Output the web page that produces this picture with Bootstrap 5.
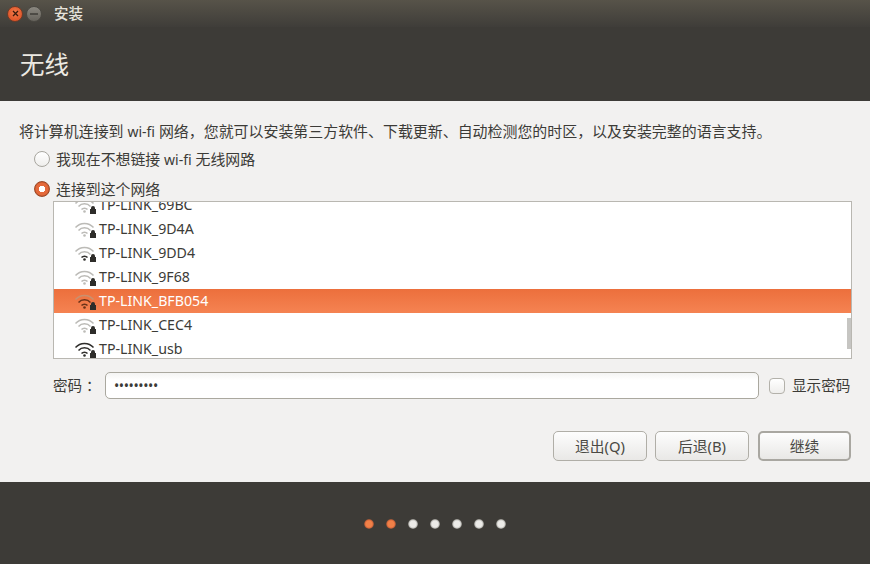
<!DOCTYPE html>
<html lang="zh-CN">
<head>
<meta charset="utf-8">
<link href="https://cdn.jsdelivr.net/npm/bootstrap@5.3.0/dist/css/bootstrap.min.css" rel="stylesheet">
<style>
html,body{width:870px;height:564px;overflow:hidden;margin:0}
body{font-family:"Noto Sans","Noto Sans CJK SC",sans-serif;font-size:14px;color:#3c3b37;background:#f2f1f0}
.shell{width:870px;height:564px}
.titlebar{height:27px;background:linear-gradient(#575349,#3f3d39);padding-left:7px;gap:3px}
.winbtn{width:16px;height:16px;border-radius:50%;font-size:0}
.winbtn svg{display:block}
.w-close{background:radial-gradient(circle at 50% 40%,#f27a4a,#d9481d);border:1px solid #6d3b28}
.w-min{background:linear-gradient(#8b8880,#66635c);border:1px solid #4a4842}
.wintitle{color:#e6e3dc;font-size:14.5px;font-weight:500;margin-left:9px;line-height:27px}
.headbar{height:74px;background:#3d3b37;padding-left:20px;padding-top:20px}
.pagetitle{color:#ece9e2;font-size:24.5px;font-weight:400;line-height:36px;margin:0}
.mainarea{height:381px;padding:20px 19px 0 20px;position:relative}
.intro{line-height:20px;font-size:14.95px;color:#3c3b37;white-space:nowrap;margin-left:-1px}
.latin{font-size:14px}
.optrow{margin-left:14px;height:20px;line-height:20px;gap:6px;white-space:nowrap;font-size:14.9px}
.opt1{margin-top:7px}
.opt2{margin-top:10px}
.radiomark{width:16px;height:16px;border-radius:50%;border:1px solid #a8a69f;background:linear-gradient(#fff,#efeeec)}
.radiomark.on{background:radial-gradient(circle,#fff 0 3px,#e4693a 3.5px 6px,#c4542a 7px);border-color:#9c4a28}
.netlist{margin-left:33px;width:799px;height:158px;margin-top:2px;background:#fff;border:1px solid #b9b7b1;overflow:hidden;position:relative}
.netrow{height:24px;padding-left:20px;gap:2px;line-height:24px;color:#3c3b37;white-space:nowrap;font-size:14.2px}
.netrow:first-child{margin-top:-9px}
.netrow.picked{background:linear-gradient(#ec6f3c,#f58352);color:#fff}
.netrow svg{flex:none}
.thumb{position:absolute;right:0;top:116px;width:4px;height:31px;background:#c6c5c2}
.pwrow{margin-top:13px;margin-left:33px;width:799px;height:27px;white-space:nowrap;font-size:14.6px}
.pwlabel{width:52px}
.pwinput{width:654px;height:27px;border:1px solid #aaa89f;border-radius:5px;background:linear-gradient(#f4f4f3,#fff 30%);padding:0 8px;font-size:14px;line-height:25px;color:#3c3b37;letter-spacing:-.4px}
.checkmark{width:16px;height:16px;border:1px solid #b3b1aa;border-radius:4px;background:linear-gradient(#fff,#efeeec);margin-left:10px;margin-right:7px}
.actions{position:absolute;left:553px;top:330px;gap:8px}
.actbtn{width:94px;height:30px;border:1px solid #b0aea7;border-radius:5px;background:linear-gradient(#fdfdfd,#e9e8e6);font-size:14.8px;color:#4a4944;line-height:28px;text-align:center}
.actbtn.primaryact{width:93px;border:2px solid #a9a7a1;line-height:26px;margin-left:1px}
.footbar{height:82px;background:#3d3b37;padding-top:37px;gap:12px;padding-left:364px}
.stepdot{width:10px;height:10px;border-radius:50%;background:radial-gradient(circle,#ecebe8 0 3px,#c9c8c4 4px,#77756f 5px)}
.stepdot.done{background:radial-gradient(circle,#f08048 0 3px,#d9683a 4px,#6f4a38 5px)}
</style>
</head>
<body>
<div class="shell d-flex flex-column">
  <div class="titlebar d-flex align-items-center">
    <span class="winbtn w-close d-flex align-items-center justify-content-center"><svg width="7" height="7" viewBox="0 0 7 7"><path d="M1 1l5 5M6 1L1 6" stroke="#3a1a0c" stroke-width="1.3"/></svg></span>
    <span class="winbtn w-min d-flex align-items-center justify-content-center"><svg width="8" height="2" viewBox="0 0 8 2"><path d="M0 1h8" stroke="#3a3934" stroke-width="1.4"/></svg></span>
    <span class="wintitle">安装</span>
  </div>
  <div class="headbar"><h1 class="pagetitle">无线</h1></div>
  <div class="mainarea">
    <div class="intro">将计算机连接到 <span class="latin">wi-fi</span> 网络，您就可以安装第三方软件、下载更新、自动检测您的时区，以及安装完整的语言支持。</div>
    <div class="optrow opt1 d-flex align-items-center"><span class="radiomark"></span><span>我现在不想链接 <span class="latin">wi-fi</span> 无线网路</span></div>
    <div class="optrow opt2 d-flex align-items-center"><span class="radiomark on"></span><span>连接到这个网络</span></div>
    <div class="netlist">
      <div class="netrow d-flex align-items-center"><svg width="23" height="18" viewBox="0 0 23 18"><g fill="none" stroke="#bcbbb7" stroke-width="1.5"><path d="M1.5 7.5a12 12 0 0 1 18 0"/><path d="M4.5 10.5a8 8 0 0 1 12 0"/><path d="M7.5 13.5a4 4 0 0 1 6 0"/></g><circle cx="10.5" cy="15.5" r="1.3" fill="#bcbbb7"/><path d="M16 13h1v-1a2 2 0 0 1 4 0v1h1v5h-6z" fill="#2e2d2a"/></svg><span>TP-LINK_69BC</span></div>
      <div class="netrow d-flex align-items-center"><svg width="23" height="18" viewBox="0 0 23 18"><g fill="none" stroke="#bcbbb7" stroke-width="1.5"><path d="M1.5 7.5a12 12 0 0 1 18 0"/><path d="M4.5 10.5a8 8 0 0 1 12 0"/><path d="M7.5 13.5a4 4 0 0 1 6 0"/></g><circle cx="10.5" cy="15.5" r="1.3" fill="#bcbbb7"/><path d="M16 13h1v-1a2 2 0 0 1 4 0v1h1v5h-6z" fill="#2e2d2a"/></svg><span>TP-LINK_9D4A</span></div>
      <div class="netrow d-flex align-items-center"><svg width="23" height="18" viewBox="0 0 23 18"><g fill="none" stroke="#bcbbb7" stroke-width="1.5"><path d="M1.5 7.5a12 12 0 0 1 18 0"/><path d="M4.5 10.5a8 8 0 0 1 12 0"/></g><path d="M7.5 13.5a4 4 0 0 1 6 0" fill="none" stroke="#2e2d2a" stroke-width="1.5"/><circle cx="10.5" cy="15.5" r="1.3" fill="#2e2d2a"/><path d="M16 13h1v-1a2 2 0 0 1 4 0v1h1v5h-6z" fill="#2e2d2a"/></svg><span>TP-LINK_9DD4</span></div>
      <div class="netrow d-flex align-items-center"><svg width="23" height="18" viewBox="0 0 23 18"><g fill="none" stroke="#bcbbb7" stroke-width="1.5"><path d="M1.5 7.5a12 12 0 0 1 18 0"/><path d="M4.5 10.5a8 8 0 0 1 12 0"/><path d="M7.5 13.5a4 4 0 0 1 6 0"/></g><circle cx="10.5" cy="15.5" r="1.3" fill="#bcbbb7"/><path d="M16 13h1v-1a2 2 0 0 1 4 0v1h1v5h-6z" fill="#2e2d2a"/></svg><span>TP-LINK_9F68</span></div>
      <div class="netrow picked d-flex align-items-center"><svg width="23" height="18" viewBox="0 0 23 18"><path d="M1.5 7.5a12 12 0 0 1 18 0" fill="none" stroke="#c9906f" stroke-width="1.5"/><g fill="none" stroke="#6a3218" stroke-width="1.5"><path d="M4.5 10.5a8 8 0 0 1 12 0"/><path d="M7.5 13.5a4 4 0 0 1 6 0"/></g><circle cx="10.5" cy="15.5" r="1.3" fill="#6a3218"/><path d="M16 13h1v-1a2 2 0 0 1 4 0v1h1v5h-6z" fill="#2e2d2a"/></svg><span>TP-LINK_BFB054</span></div>
      <div class="netrow d-flex align-items-center"><svg width="23" height="18" viewBox="0 0 23 18"><g fill="none" stroke="#bcbbb7" stroke-width="1.5"><path d="M1.5 7.5a12 12 0 0 1 18 0"/><path d="M4.5 10.5a8 8 0 0 1 12 0"/><path d="M7.5 13.5a4 4 0 0 1 6 0"/></g><circle cx="10.5" cy="15.5" r="1.3" fill="#bcbbb7"/><path d="M16 13h1v-1a2 2 0 0 1 4 0v1h1v5h-6z" fill="#2e2d2a"/></svg><span>TP-LINK_CEC4</span></div>
      <div class="netrow d-flex align-items-center"><svg width="23" height="18" viewBox="0 0 23 18"><g fill="none" stroke="#2e2d2a" stroke-width="1.5"><path d="M1.5 7.5a12 12 0 0 1 18 0"/><path d="M4.5 10.5a8 8 0 0 1 12 0"/><path d="M7.5 13.5a4 4 0 0 1 6 0"/></g><circle cx="10.5" cy="15.5" r="1.3" fill="#2e2d2a"/><path d="M16 13h1v-1a2 2 0 0 1 4 0v1h1v5h-6z" fill="#2e2d2a"/></svg><span>TP-LINK_usb</span></div>
      <div class="thumb"></div>
    </div>
    <div class="pwrow d-flex align-items-center">
      <span class="pwlabel">密码 ：</span>
      <div class="pwinput">•••••••••</div>
      <span class="checkmark"></span><span>显示密码</span>
    </div>
    <div class="actions d-flex">
      <div class="actbtn">退出(Q)</div>
      <div class="actbtn">后退(B)</div>
      <div class="actbtn primaryact">继续</div>
    </div>
  </div>
  <div class="footbar d-flex">
    <span class="stepdot done"></span><span class="stepdot done"></span><span class="stepdot"></span><span class="stepdot"></span><span class="stepdot"></span><span class="stepdot"></span><span class="stepdot"></span>
  </div>
</div>
</body>
</html>
